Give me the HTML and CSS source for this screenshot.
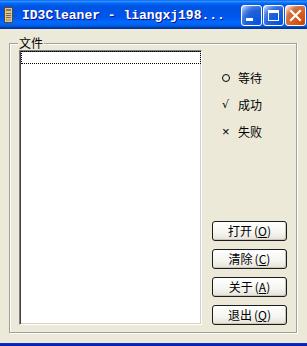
FILE: index.html
```html
<!DOCTYPE html>
<html>
<head>
<meta charset="utf-8">
<link rel="stylesheet" href="styles.css">
</head>
<body>
<div class="window">
  <div class="titlebar">
    <svg class="app-icon" width="9" height="16" viewBox="0 0 9 16">
      <rect x="0.5" y="0.5" width="8" height="15" fill="#d8c79a" stroke="#5a4a2a"/>
      <rect x="2" y="2" width="5" height="2" fill="#8a7a50"/>
      <rect x="2" y="6" width="5" height="1" fill="#7a6a40"/>
      <rect x="2" y="8" width="5" height="1" fill="#7a6a40"/>
      <rect x="2" y="10" width="5" height="1" fill="#7a6a40"/>
      <rect x="2" y="12" width="5" height="2" fill="#b8a878"/>
    </svg>
    <span class="title">ID3Cleaner - liangxj198...</span>
    <div class="caption-buttons">
      <div class="cap-btn cap-min"><span class="min-bar"></span></div>
      <div class="cap-btn cap-max"><span class="max-box"></span></div>
      <div class="cap-btn cap-close">
        <svg width="13" height="13" viewBox="0 0 13 13"><path d="M2 2 L11 11 M11 2 L2 11" stroke="#fff" stroke-width="2.2" stroke-linecap="square"/></svg>
      </div>
    </div>
  </div>
  <div class="client">
    <fieldset class="group">
      <legend class="group-title">文件</legend>
      <div class="group-body">
        <div class="listbox"><div class="focus-row"></div></div>
        <div class="side">
          <ul class="status-list">
            <li><span class="mark"><span class="circle"></span></span>等待</li>
            <li><span class="mark check">√</span>成功</li>
            <li><span class="mark cross">×</span>失败</li>
          </ul>
          <div class="buttons">
            <button class="btn">打开<span class="key">(<u>O</u>)</span></button>
            <button class="btn">清除<span class="key">(<u>C</u>)</span></button>
            <button class="btn">关于<span class="key">(<u>A</u>)</span></button>
            <button class="btn">退出<span class="key">(<u>Q</u>)</span></button>
          </div>
        </div>
      </div>
    </fieldset>
  </div>
  <div class="bottom-frame"></div>
</div>
</body>
</html>
```
FILE: styles.css
```css
html, body {
  margin: 0;
  padding: 0;
}
body {
  width: 307px;
  height: 346px;
  overflow: hidden;
  background: #ece9d8;
  font-family: "Noto Sans CJK SC", "Liberation Sans", sans-serif;
  font-size: 12px;
  color: #000;
}
.window {
  display: flex;
  flex-direction: column;
  width: 307px;
  height: 346px;
}
.titlebar {
  height: 29px;
  flex: none;
  display: flex;
  align-items: center;
  background: linear-gradient(to bottom, #0058ee 0%, #3a93ff 4%, #288eff 6%, #127dff 8%, #036ffc 10%, #0262ee 14%, #0057e5 20%, #0054e3 24%, #0055eb 56%, #005bf5 66%, #026afe 76%, #0062ef 86%, #0052d6 92%, #0040ab 94%, #003092 100%);
}
.app-icon {
  margin-left: 4px;
  margin-top: 1px;
  flex: none;
}
.title {
  margin-left: 9px;
  font-family: "Liberation Mono", monospace;
  font-weight: bold;
  font-size: 13px;
  color: #fff;
  text-shadow: 1px 1px 0 #0f1089;
  white-space: nowrap;
  flex: 1;
  margin-top: 1px;
}
.caption-buttons {
  display: flex;
  gap: 1px;
  margin-right: 1px;
  margin-top: 1px;
}
.cap-btn {
  width: 21px;
  height: 21px;
  box-sizing: border-box;
  border: 1px solid #fff;
  border-radius: 3px;
  display: flex;
  align-items: center;
  justify-content: center;
  position: relative;
}
.cap-min, .cap-max {
  background: radial-gradient(circle at 90% 90%, #0054e9 0%, #2263d5 55%, #4479e4 70%, #a3bbec 90%, #ffffff 100%);
}
.cap-close {
  background: radial-gradient(circle at 90% 90%, #cc4600 0%, #dc6527 55%, #cd7546 70%, #ffccb2 90%, #ffffff 100%);
}
.min-bar {
  position: absolute;
  left: 4px;
  bottom: 4px;
  width: 7px;
  height: 3px;
  background: #fff;
}
.max-box {
  width: 11px;
  height: 11px;
  box-sizing: border-box;
  border: 1px solid #fff;
  border-top-width: 3px;
}
.client {
  flex: 1;
  padding-top: 7px;
}
.group {
  margin: 0 0 0 9px;
  width: 288px;
  box-sizing: border-box;
  height: 297px;
  padding: 0 0 7px 9px;
  border: 1px solid #a0a0a0;
  box-shadow: inset 1px 1px 0 #fff, 1px 1px 0 #fff;
  min-width: 0;
}
.group-title {
  padding: 0 1px;
  margin-left: -1px;
  line-height: 14px;
  height: 14px;
  font-size: 12px;
  background: #ece9d8;
}
.group-body {
  display: flex;
  height: 275px;
}
.listbox {
  width: 183px;
  height: 275px;
  box-sizing: border-box;
  background: #fff;
  border: 1px solid;
  border-color: #808080 #ffffff #ffffff #808080;
  box-shadow: inset 1px 1px 0 #404040, inset -1px -1px 0 #d4d0c8;
  flex: none;
}
.focus-row {
  height: 13px;
  box-sizing: border-box;
  margin-left: 1px;
  margin-right: 0;
  border: 1px dotted #000;
}
.side {
  flex: 1;
  display: flex;
  flex-direction: column;
  padding: 0 9px 0 10px;
}
.status-list {
  list-style: none;
  margin: 0;
  padding: 21px 0 0 10px;
  display: flex;
  flex-direction: column;
  gap: 13px;
}
.status-list li {
  display: flex;
  align-items: center;
  height: 14px;
  line-height: 14px;
  font-size: 12px;
}
.mark {
  width: 16px;
  flex: none;
  display: flex;
  align-items: center;
}
.circle {
  width: 8px;
  height: 8px;
  box-sizing: border-box;
  border: 1px solid #000;
  border-radius: 50%;
}
.check {
  font-family: "DejaVu Sans", sans-serif;
  font-size: 11px;
}
.cross {
  font-family: "Liberation Sans", sans-serif;
  font-size: 13px;
}
.buttons {
  margin-top: auto;
  display: flex;
  flex-direction: column;
  gap: 8px;
}
.btn {
  width: 75px;
  height: 20px;
  box-sizing: border-box;
  padding: 0;
  margin: 0;
  border: 1px solid #1b1b1b;
  border-radius: 3px;
  background: linear-gradient(to bottom, #ffffff 0%, #f4f4f0 60%, #e4e2d8 100%);
  box-shadow: inset -1px -1px 0 #c9c6b8;
  font-family: "Noto Sans CJK SC", "Liberation Sans", sans-serif;
  font-size: 12px;
  line-height: 16px;
  color: #000;
}
.key {
  margin-left: 2px;
}
.btn u {
  text-underline-offset: 1px;
}
.bottom-frame {
  height: 3px;
  flex: none;
  background: linear-gradient(to bottom, #0831d9, #001ea0);
}
```
